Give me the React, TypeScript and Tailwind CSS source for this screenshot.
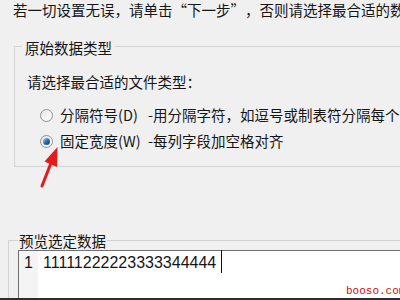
import React from 'react';

const cjk = { fontFamily: '"Noto Sans CJK SC", "Liberation Sans", sans-serif' };

const Radio: React.FC<{ checked?: boolean }> = ({ checked }) => (
  <span className="flex items-center justify-center w-[13px] h-[13px] rounded-full border border-[#8e8f8f] bg-gradient-to-br from-[#e6e6e6] to-[#ffffff] shrink-0">
    {checked && (
      <span className="w-[7px] h-[7px] rounded-full bg-gradient-to-br from-[#a9d4f5] via-[#2f6fab] to-[#0e3a66]" />
    )}
  </span>
);

const App: React.FC = () => {
  return (
    <div
      className="relative w-[400px] h-[300px] overflow-hidden bg-[#f0f0f0] text-[#151515] text-[14.5px] flex flex-col border-b-2 border-[#2e2e2e]"
      style={cjk}
    >
      <p className="pl-[13px] leading-[20px] whitespace-nowrap">
        若一切设置无误，请单击<span className="inline-block w-[14.5px] text-right">“</span>下一步<span className="inline-block w-[14.5px] text-left">”</span>，否则请选择最合适的数据类型。
      </p>

      {/* 原始数据类型 */}
      <div className="ml-[14px] mt-[26px] border-l border-t border-b border-[#d3d3d3] pb-[15px]">
        <div className="w-fit -mt-[9px] ml-[7px] px-[3px] bg-[#f0f0f0] leading-[20px]">原始数据类型</div>
        <div className="mt-[14px] pl-[12px] leading-[20px]">请选择最合适的文件类型：</div>
        <div className="mt-[13px] flex flex-col gap-[6px]">
          <div className="flex items-center h-[20px] pl-[25px] whitespace-nowrap">
            <Radio />
            <span className="ml-[7px] w-[88px] shrink-0">分隔符号(D)</span>
            <span>-用分隔字符，如逗号或制表符分隔每个字段</span>
          </div>
          <div className="flex items-center h-[20px] pl-[25px] whitespace-nowrap">
            <Radio checked />
            <span className="ml-[7px] w-[88px] shrink-0">固定宽度(W)</span>
            <span>-每列字段加空格对齐</span>
          </div>
        </div>
      </div>

      {/* 预览选定数据 */}
      <div className="ml-[8px] mt-[73px] flex-1 flex flex-col border-l border-t border-[#d3d3d3]">
        <div className="w-fit -mt-[9px] ml-[9px] px-[1px] bg-[#f0f0f0] leading-[18px]">预览选定数据</div>
        <div className="ml-[9px] flex-1 flex bg-white border-l border-t border-[#707070]">
          <div className="w-[19px] bg-[#f4f4f4] flex justify-center">
            <span className="leading-[24px] text-[16px]" style={{ fontFamily: '"Liberation Sans", sans-serif' }}>1</span>
          </div>
          <div className="pl-[5px] flex items-start">
            <span className="leading-[24px] text-[16px]" style={{ fontFamily: '"Liberation Sans", sans-serif' }}>
              11111222223333344444
            </span>
            <span className="ml-[5px] w-[1px] h-[23px] bg-[#111] mt-[-1px]" />
          </div>
        </div>
      </div>

      {/* red arrow */}
      <svg className="absolute left-[36px] top-[144px]" width="30" height="46" viewBox="0 0 30 46">
        <polygon points="21.5,3 21,23 8.5,17.5" fill="#e31b1b" />
        <line x1="14.8" y1="19.5" x2="6" y2="42" stroke="#e31b1b" strokeWidth="3" strokeLinecap="round" />
      </svg>

      <span
        className="absolute left-[346px] top-[284px] text-[11px] leading-[14px] text-[#cc1010] whitespace-nowrap"
        style={{ fontFamily: '"Liberation Mono", monospace' }}
      >
        booso.com
      </span>
    </div>
  );
};

export default App;
